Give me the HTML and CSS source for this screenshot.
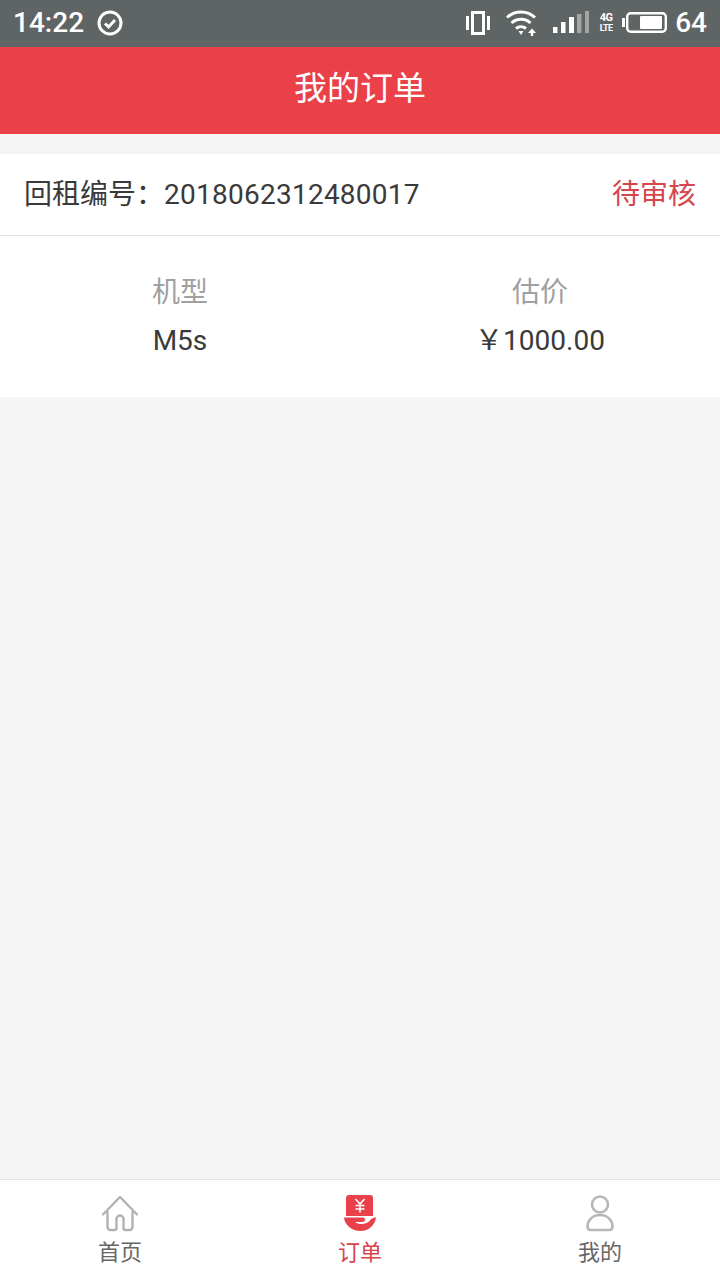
FILE: index.html
```
<!DOCTYPE html>
<html lang="zh">
<head>
<meta charset="utf-8">
<title>我的订单</title>
<link rel="stylesheet" href="styles.css">
</head>
<body>
<div class="app">
  <div class="status">
    <div class="status-left">
      <span class="clock">14:22</span>
      <svg class="ic-check" width="26" height="26" viewBox="0 0 26 26"><circle cx="13" cy="13" r="11" fill="none" stroke="#fff" stroke-width="3"/><path d="M8 13.500l3.600 3.400L18 10" fill="none" stroke="#fff" stroke-width="3"/></svg>
    </div>
    <div class="status-right">
      <svg width="24" height="24" viewBox="0 0 24 24"><rect x="0" y="5" width="3" height="14" fill="#fff"/><rect x="21" y="5" width="3" height="14" fill="#fff"/><rect x="6.500" y="1.500" width="11" height="21" fill="none" stroke="#fff" stroke-width="3"/></svg>
      <svg class="ic-wifi" width="31" height="26" viewBox="0 0 31 26"><path d="M1 7.500C8.500 0 21.500 0 29 7.500M5.500 13C11 8 19 8 24.500 13M10 18.500C13 16 17 16 20 18.500" fill="none" stroke="#fff" stroke-width="3"/><path d="M12.500 21h5l-2.500 4z" fill="#fff"/><path d="M26 18.500l4 4.500h-2.800v3h-2.400v-3H22z" fill="#fff"/></svg>
      <svg class="ic-signal" width="36" height="23" viewBox="0 0 36 23"><rect x="0" y="16" width="4.500" height="6" fill="#fff"/><rect x="8" y="11" width="4.500" height="11" fill="#fff"/><rect x="16" y="6" width="5" height="16" fill="#fff"/><rect x="24" y="3" width="4.500" height="19" fill="#a2a7a6"/><rect x="32" y="0" width="4" height="22" fill="#a2a7a6"/></svg>
      <div class="net"><span class="net-top">4G</span><span class="net-bottom">LTE</span></div>
      <svg class="ic-batt" width="45" height="21" viewBox="0 0 45 21"><rect x="0" y="6" width="3" height="9" fill="#fff"/><rect x="5.200" y="1.200" width="38.600" height="18.600" rx="3.500" fill="none" stroke="#fff" stroke-width="2.400"/><rect x="18" y="4" width="22" height="13" rx="1" fill="#fff"/></svg>
      <span class="level">64</span>
    </div>
  </div>

  <header class="title">我的订单</header>

  <main class="content">
    <section class="order">
      <div class="order-head">
        <span class="order-no">回租编号：<span class="order-digits">2018062312480017</span></span>
        <span class="order-state">待审核</span>
      </div>
      <div class="order-body">
        <div class="cell">
          <div class="cell-label">机型</div>
          <div class="cell-value">M5s</div>
        </div>
        <div class="cell">
          <div class="cell-label">估价</div>
          <div class="cell-value">￥1000.00</div>
        </div>
      </div>
    </section>
  </main>

  <nav class="tabs">
    <div class="tab">
      <svg width="40" height="40" viewBox="0 0 40 40"><path d="M3 20.500L20 3l17 17.500" fill="none" stroke="#b2b2b2" stroke-width="2.400" stroke-linecap="round" stroke-linejoin="round"/><path d="M7.500 18v15a3 3 0 0 0 3 3h4a2 2 0 0 0 2-2V25a3.500 3.500 0 0 1 7 0v9a2 2 0 0 0 2 2h4a3 3 0 0 0 3-3V18" fill="none" stroke="#b2b2b2" stroke-width="2.400" stroke-linecap="round"/></svg>
      <span class="tab-label">首页</span>
    </div>
    <div class="tab tab-active">
      <svg width="40" height="40" viewBox="0 0 40 40"><path d="M6 4a3 3 0 0 1 3-3h21a3 3 0 0 1 3 3v18H6z" fill="#e8414b"/><path d="M4 23.500h18c4 0 4.500 3.800.5 4.500H15c4 3 11 2.500 14-.5 1.500-1.500 3-4 6-4h1C35 31 29 37 20.500 37 12 37 4.500 31 4 23.500z" fill="#e8414b"/><path d="M15.500 5l4.500 5 4.500-5M15.500 11.500h9M15.500 15h9M20 10v8.500" fill="none" stroke="#fff" stroke-width="1.600"/></svg>
      <span class="tab-label">订单</span>
    </div>
    <div class="tab">
      <svg width="40" height="40" viewBox="0 0 40 40"><circle cx="20" cy="10.500" r="8" fill="none" stroke="#b8b8b8" stroke-width="2.600"/><path d="M20 21C12 21 7.500 27 7.500 32.500c0 2.500 1.500 3.500 3.500 3.500h18c2 0 3.500-1 3.500-3.500C32.500 27 28 21 20 21z" fill="none" stroke="#b8b8b8" stroke-width="2.600" stroke-linejoin="round"/></svg>
      <span class="tab-label">我的</span>
    </div>
  </nav>
</div>
</body>
</html>
```

FILE: styles.css
```
* { box-sizing: border-box; }
html, body { margin: 0; padding: 0; }
body {
  font-family: Roboto, "Noto Sans CJK SC", sans-serif;
  color: #333;
}
.app {
  width: 720px;
  height: 1280px;
  display: flex;
  flex-direction: column;
  background: #f5f5f5;
}
.status {
  height: 47px;
  background: #5f6564;
  display: flex;
  justify-content: space-between;
  align-items: center;
  padding: 0 13px 2px 13px;
  color: #fff;
}
.status-left, .status-right { display: flex; align-items: center; }
.clock { font-size: 28px; font-weight: 500; }
.ic-check { margin-left: 13px; }
.ic-wifi { margin-left: 16px; }
.ic-signal { margin-left: 16px; }
.net {
  display: flex;
  flex-direction: column;
  width: 14px;
  margin-left: 10px;
  align-items: center;
  font-weight: 700;
  text-align: center;
}
.net-top { font-size: 11px; line-height: 11px; letter-spacing: -0.5px; }
.net-bottom { font-size: 9px; line-height: 10px; letter-spacing: -0.5px; }
.ic-batt { margin-left: 9px; }
.level { font-size: 28px; font-weight: 500; margin-left: 8px; }
.title {
  height: 87px;
  background: #ea4149;
  color: #fff;
  font-size: 33px;
  display: flex;
  align-items: center;
  justify-content: center;
  padding-bottom: 10px;
}
.content { flex: 1; padding-top: 20px; }
.order { background: #fff; }
.order-head {
  height: 82px;
  border-bottom: 1px solid #e2e2e2;
  display: flex;
  justify-content: space-between;
  align-items: center;
  padding: 0 24px 6px 24px;
  font-size: 28px;
}
.order-no { color: #3a3a3a; }
.order-digits { letter-spacing: 0.25px; }
.order-state { color: #d5454c; }
.order-body {
  height: 161px;
  display: flex;
  padding-top: 34px;
}
.cell { flex: 1; text-align: center; }
.cell-label { font-size: 28px; line-height: 46px; color: #a0a0a0; }
.cell-value { font-size: 28px; line-height: 50px; color: #3a3a3a; }
.tabs {
  height: 101px;
  background: #fff;
  border-top: 1px solid #e2e2e2;
  display: flex;
}
.tab {
  flex: 1;
  display: flex;
  flex-direction: column;
  align-items: center;
  padding-top: 14px;
  color: #666;
}
.tab svg { display: block; }
.tab-label { font-size: 22px; line-height: 32px; margin-top: 3px; }
.tab-active { color: #d5454c; }
```
